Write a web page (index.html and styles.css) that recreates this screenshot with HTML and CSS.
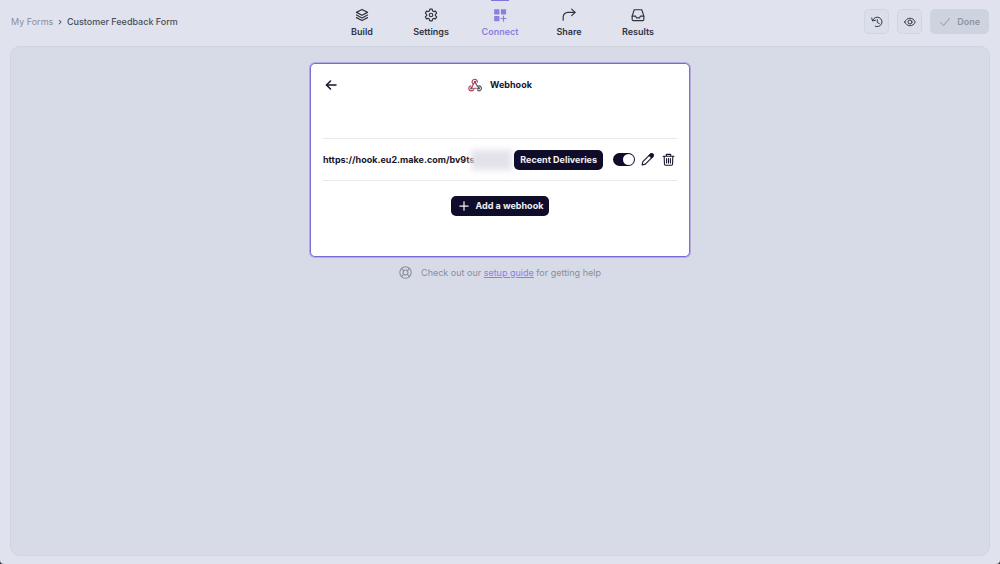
FILE: index.html
```html
<!DOCTYPE html>
<html lang="en">
<head>
  <meta charset="UTF-8">
  <meta name="viewport" content="width=device-width, initial-scale=1">
  <title>Customer Feedback Form</title>
  <link rel="stylesheet" href="styles.css">
</head>
<body>
  <div class="app">
    <header class="topbar">
      <div class="breadcrumb">
        <a href="#">My Forms</a>
        <span class="separator">›</span>
        <span class="current">Customer Feedback Form</span>
      </div>

      <nav class="tabs">
        <a class="tab" href="#">
          <svg viewBox="0 0 24 24"><path d="M12 2.500 21.500 7.500 12 12.500 2.500 7.500z"/><path d="m2.500 12 9.500 5 9.500-5"/><path d="m2.500 16.500 9.500 5 9.500-5"/></svg>
          Build
        </a>
        <a class="tab" href="#">
          <svg viewBox="0 0 24 24"><path d="M10 2h4l.7 3 2 1.200 3-.9 2 3.400-2.200 2.100v2.400l2.200 2.100-2 3.400-3-.9-2 1.200-.7 3h-4l-.7-3-2-1.200-3 .9-2-3.400 2.200-2.100v-2.400L2.300 8.700l2-3.400 3 .9 2-1.200z"/><circle cx="12" cy="12" r="3"/></svg>
          Settings
        </a>
        <a class="tab active" href="#">
          <svg viewBox="0 0 24 24"><rect class="solid" x="2" y="2" width="9" height="9" rx="1"/><rect class="solid" x="13.500" y="2" width="9" height="9" rx="1"/><rect class="solid" x="2" y="13.500" width="9" height="9" rx="1"/><path d="M18 14v8.500M13.700 18h8.500"/></svg>
          Connect
        </a>
        <a class="tab" href="#">
          <svg viewBox="0 0 24 24"><path d="M2 21v-5.500a8 8 0 0 1 8-8h12"/><path d="m16.500 2 6 5.500-6 5.500"/></svg>
          Share
        </a>
        <a class="tab" href="#">
          <svg viewBox="0 0 24 24"><path d="M5.500 3h13l3.500 11v5.500a2 2 0 0 1-2 2H4a2 2 0 0 1-2-2V14z"/><path d="M2 14h6l1.500 3h5l1.500-3h6"/></svg>
          Results
        </a>
      </nav>

      <div class="actions">
        <button class="icon-button" type="button" aria-label="History">
          <svg viewBox="0 0 24 24"><path d="M3.500 8.500a9.500 9.500 0 1 1 5 12"/><path d="M1.500 4l1.500 6 6-1.500"/><path d="M12.500 7.500v5.500l4 2"/></svg>
        </button>
        <button class="icon-button" type="button" aria-label="Preview">
          <svg viewBox="0 0 24 24"><path d="M1.500 12C4 7 7.500 4.500 12 4.500S20 7 22.500 12C20 17 16.500 19.500 12 19.500S4 17 1.500 12z"/><circle cx="12" cy="12" r="4"/></svg>
        </button>
        <button class="done-button" type="button" disabled>
          <svg viewBox="0 0 24 24"><path d="m3 13 6 6L21 5"/></svg>
          Done
        </button>
      </div>
    </header>

    <main class="workspace">
      <section class="card">
        <div class="card-header">
          <button class="plain-button back" type="button" aria-label="Back">
            <svg viewBox="0 0 24 24"><path d="M22 12H3"/><path d="m11 4-8 8 8 8"/></svg>
          </button>
          <h1 class="card-title">
            <svg class="webhook-logo" viewBox="0 0 24 24">
              <path class="red" d="M8.500 10a4.500 4.500 0 1 1 7.500-3"/>
              <path class="red" d="M11.500 7 6.500 16"/>
              <path class="dark" d="m12 7 4.500 7.500a4 4 0 1 1-.5 6"/>
              <path class="pink" d="M18.500 17.500h-8.500a4.300 4.300 0 1 1-5-4"/>
              <circle class="red-dot" cx="12" cy="6.500" r="2"/>
              <circle class="dark-dot" cx="6" cy="17.500" r="2"/>
              <circle class="dark-dot" cx="18.500" cy="17.500" r="2"/>
            </svg>
            Webhook
          </h1>
        </div>

        <div class="webhook-row">
          <div class="webhook-url">https://hook.eu2.make.com/bv9ts<span class="url-mask"></span></div>
          <button class="dark-button" type="button">Recent Deliveries</button>
          <input class="toggle" type="checkbox" aria-label="Webhook enabled" checked>
          <button class="plain-button edit" type="button" aria-label="Edit webhook">
            <svg viewBox="0 0 24 24"><path d="m2 22 1.500-6L17 2.500a2.500 2.500 0 0 1 4.500 4.500L8 20.500z"/><path class="tip" d="m15 4.500 2.500-2.500a2.800 2.800 0 0 1 4.500 4.500L19.500 9z"/></svg>
          </button>
          <button class="plain-button delete" type="button" aria-label="Delete webhook">
            <svg viewBox="0 0 24 24"><path d="M2 6h20M8 6V2.500h8V6M4 6l.5 14.500a2 2 0 0 0 2 2h11a2 2 0 0 0 2-2L20 6M8.500 10v8.500M12 10v8.500M15.500 10v8.500"/></svg>
          </button>
        </div>

        <button class="dark-button add-button" type="button">
          <svg viewBox="0 0 24 24"><path d="M12 2v20M2 12h20"/></svg>
          Add a webhook
        </button>
      </section>

      <p class="help">
        <svg viewBox="0 0 24 24"><circle cx="12" cy="12" r="10.500"/><circle cx="12" cy="12" r="4.500"/><path d="m4.500 4.500 4.300 4.300M19.500 4.500l-4.300 4.300M4.500 19.500l4.300-4.300M19.500 19.500l-4.300-4.300"/></svg>
        <span>Check out our <a href="#">setup guide</a> for getting help</span>
      </p>
    </main>
  </div>
</body>
</html>
```

FILE: styles.css
```css
* {
  margin: 0;
  padding: 0;
  box-sizing: border-box;
}

html {
  background-color: #33343c;
}

body {
  font-family: Inter, sans-serif;
  font-size: 9px;
  line-height: 12px;
  color: #30323f;
}

button {
  font: inherit;
  border: none;
  cursor: pointer;
}

a {
  color: inherit;
  text-decoration: none;
}

svg {
  display: block;
  flex: none;
  fill: none;
  stroke: currentColor;
  stroke-width: 2;
  stroke-linecap: round;
  stroke-linejoin: round;
}

.app {
  display: flex;
  flex-direction: column;
  min-height: 100vh;
  padding: 0 10px 8px;
  background-color: #e0e3ed;
  border-radius: 0 0 4px 4px;
}

.topbar {
  display: grid;
  grid-template-columns: 1fr auto 1fr;
  align-items: center;
  height: 46px;
}

.breadcrumb {
  display: flex;
  gap: 5px;
  padding: 0 0 2px 1px;
  color: #8c8e9a;
}

.breadcrumb .separator,
.breadcrumb .current {
  font-weight: 500;
  color: #4a4d5b;
}

.tabs {
  display: flex;
  align-self: start;
}

.tab {
  display: flex;
  flex-direction: column;
  align-items: center;
  gap: 4px;
  width: 69px;
  padding-top: 8px;
  font-weight: 600;
  position: relative;
}

.tab svg {
  width: 14px;
  height: 14px;
}

.tab.active {
  color: #8b7fe0;
}

.tab.active::before {
  content: "";
  position: absolute;
  top: 0;
  width: 18px;
  height: 1px;
  background-color: #8474dc;
}

.solid {
  fill: currentColor;
  stroke: none;
}

.actions {
  display: flex;
  justify-content: flex-end;
  gap: 8px;
  padding: 0 1px 3px 0;
}

.icon-button,
.done-button {
  display: flex;
  align-items: center;
  justify-content: center;
  height: 25px;
  border: 1px solid #d0d5e1;
  border-radius: 5px;
  color: #343644;
}

.icon-button {
  width: 25px;
  background-color: #dbdfea;
}

.icon-button svg,
.done-button svg {
  width: 12px;
  height: 12px;
}

.done-button {
  gap: 6px;
  padding: 0 8px;
  background-color: #cdd3df;
  border-color: #cdd3df;
  font-weight: 600;
  color: #8e94a3;
  cursor: default;
}

.workspace {
  flex: 1;
  padding: 16px;
  background-color: #d7dbe7;
  border: 1px solid #d0d4e1;
  border-radius: 10px;
}

.card {
  max-width: 380px;
  height: 194px;
  margin: 0 auto;
  padding: 14px 12px;
  background-color: #fff;
  border: 1px solid #7b6bd6;
  border-radius: 5px;
  box-shadow: 0 0 0 1px #b3acdf;
  color: #16152a;
}

.card-header {
  display: grid;
  grid-template-columns: 1fr auto 1fr;
  align-items: center;
  margin-bottom: 46px;
}

.card-title {
  display: flex;
  align-items: center;
  gap: 8px;
  font-size: 9px;
  font-weight: 700;
}

.webhook-logo {
  width: 14px;
  height: 14px;
}

.webhook-logo .red {
  stroke: #a83d58;
}

.webhook-logo .pink {
  stroke: #b8435f;
}

.webhook-logo .dark {
  stroke: #55535c;
}

.red-dot,
.dark-dot {
  fill: #55535c;
  stroke: none;
}

.red-dot {
  fill: #a83d58;
}

.plain-button {
  background: none;
  color: inherit;
}

.back {
  justify-self: start;
  padding-left: 2px;
}

.back svg {
  width: 12px;
  height: 12px;
  stroke-width: 3;
}

.webhook-row {
  display: flex;
  align-items: center;
  height: 43px;
  border-top: 1px solid #e9e9ed;
  border-bottom: 1px solid #e9e9ed;
}

.webhook-url {
  position: relative;
  flex: 1;
  font-weight: 700;
  white-space: nowrap;
}

.url-mask {
  position: absolute;
  top: -4px;
  right: 2px;
  width: 41px;
  height: 20px;
  background-color: #e2e2ea;
  filter: blur(3px);
}

.dark-button {
  height: 20px;
  padding: 0 6px;
  background-color: #100d2b;
  border-radius: 5px;
  font-weight: 700;
  color: #f1f1f6;
  position: relative;
}

.toggle {
  appearance: none;
  width: 22px;
  height: 13px;
  margin: 0 6px 0 10px;
  padding: 1px;
  background-color: #100d2b;
  border-radius: 7px;
  cursor: pointer;
}

.toggle::before {
  content: "";
  display: block;
  width: 11px;
  height: 11px;
  background-color: #fff;
  border-radius: 50%;
}

.toggle:checked::before {
  margin-left: auto;
}

.edit {
  margin-right: 8px;
}

.edit svg,
.delete svg {
  width: 13px;
  height: 13px;
}

.edit .tip {
  fill: currentColor;
}

.delete {
  margin-right: 2px;
}

.add-button {
  display: flex;
  align-items: center;
  gap: 7px;
  margin: 15px auto 0;
  padding: 0 6px 0 8px;
}

.add-button svg {
  width: 10px;
  height: 10px;
  stroke-width: 3;
}

.help {
  display: flex;
  align-items: center;
  justify-content: center;
  gap: 9px;
  margin-top: 9px;
  color: #8a8d9b;
}

.help svg {
  width: 13px;
  height: 13px;
}

.help a {
  color: #8b7fe0;
  text-decoration: underline;
}
```
